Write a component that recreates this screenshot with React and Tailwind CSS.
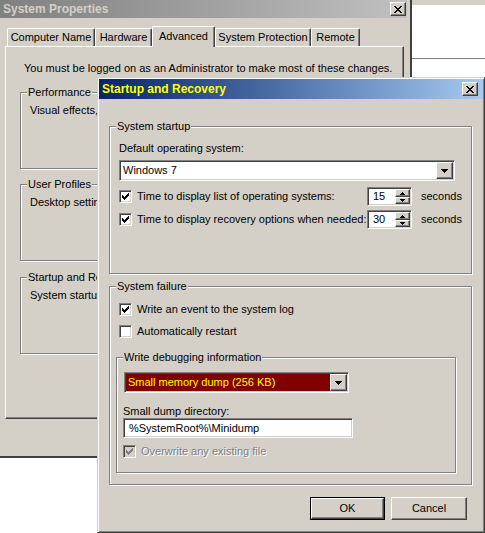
import React from "react";

const SUNKEN =
  "border border-t-[#808080] border-l-[#808080] border-r-white border-b-white shadow-[inset_1px_1px_0_#404040,inset_-1px_-1px_0_#d4d0c8]";
const RAISED =
  "border border-t-white border-l-white border-r-[#404040] border-b-[#404040] shadow-[inset_-1px_-1px_0_#808080]";
const ETCHED = "border border-[#808080] shadow-[inset_1px_1px_0_#fff,1px_1px_0_#fff]";

function CloseGlyph() {
  const rows = [
    [[0, 2], [6, 2]],
    [[1, 2], [5, 2]],
    [[2, 4]],
    [[3, 2]],
    [[2, 4]],
    [[1, 2], [5, 2]],
    [[0, 2], [6, 2]],
  ];
  return (
    <svg width="8" height="7" viewBox="0 0 8 7" shapeRendering="crispEdges">
      {rows.map((r, y) => r.map(([x, w]) => <rect key={y + "-" + x} x={x} y={y} width={w} height="1" fill="#000" />))}
    </svg>
  );
}

function CloseBtn() {
  return (
    <div className={`w-[16px] h-[14px] bg-[#d4d0c8] flex items-center justify-center ${RAISED}`}>
      <CloseGlyph />
    </div>
  );
}

function Arrow({ up, size = 7, color = "#000" }) {
  const h = Math.ceil(size / 2);
  return (
    <svg width={size} height={h} viewBox={`0 0 ${size} ${h}`} shapeRendering="crispEdges">
      {Array.from({ length: h }).map((_, i) => {
        const row = up ? h - 1 - i : i;
        return <rect key={i} x={i} y={row} width={size - i * 2} height="1" fill={color} />;
      })}
    </svg>
  );
}

function CheckGlyph({ color }) {
  const rows = [[[6, 1]], [[5, 2]], [[0, 1], [4, 3]], [[0, 2], [3, 3]], [[0, 5]], [[1, 3]], [[2, 1]]];
  return (
    <svg width="7" height="7" viewBox="0 0 7 7" shapeRendering="crispEdges">
      {rows.map((r, y) => r.map(([x, w]) => <rect key={y + "-" + x} x={x} y={y} width={w} height="1" fill={color} />))}
    </svg>
  );
}

function Check({ checked, disabled }) {
  return (
    <div
      className={`w-[13px] h-[13px] shrink-0 flex items-center justify-center ${SUNKEN} ${
        disabled ? "bg-[#d4d0c8]" : "bg-white"
      }`}
    >
      {checked && <CheckGlyph color={disabled ? "#808080" : "#000"} />}
    </div>
  );
}

function Group({ label, className, children }) {
  return (
    <div className={`relative ${ETCHED} ${className}`}>
      <span className="absolute left-[6px] -top-[7px] px-[1px] bg-[#d4d0c8] leading-[13px] whitespace-nowrap">
        {label}
      </span>
      {children}
    </div>
  );
}

function Spinner({ value }) {
  return (
    <div className={`w-[45px] h-[19px] bg-white flex items-stretch ${SUNKEN}`}>
      <span className="flex-1 pl-[5px] leading-[17px]">{value}</span>
      <div className="flex flex-col my-[1px] mr-[1px] w-[15px]">
        <div className={`h-[8px] bg-[#d4d0c8] flex items-center justify-center ${RAISED}`}>
          <Arrow up size={5} />
        </div>
        <div className={`h-[7px] bg-[#d4d0c8] flex items-center justify-center ${RAISED}`}>
          <Arrow size={5} />
        </div>
      </div>
    </div>
  );
}

function Combo({ text, width, dark }) {
  return (
    <div
      className={`h-[21px] flex items-stretch p-[1px] ${SUNKEN} ${dark ? "bg-[#800000]" : "bg-white"}`}
      style={{ width }}
    >
      <span className={`flex-1 pl-[2px] leading-[17px] ${dark ? "text-[#ffff00]" : ""}`}>{text}</span>
      <div className={`w-[17px] bg-[#d4d0c8] flex items-center justify-center ${RAISED}`}>
        <Arrow size={7} />
      </div>
    </div>
  );
}

function Tab({ label, w, selected }) {
  return (
    <div
      className={`flex items-center justify-center rounded-t-[2px] bg-[#d4d0c8] border-t border-l border-t-white border-l-white border-r border-r-[#404040] shadow-[inset_-1px_0_0_#808080] ${
        selected ? "h-[21px] -mb-[1px] relative z-10 pb-[2px]" : "h-[18px]"
      }`}
      style={{ width: w }}
    >
      {label}
    </div>
  );
}

function SystemProperties() {
  return (
    <div className="absolute left-0 top-0 w-[412px] h-[458px] bg-[#d4d0c8] border-r-2 border-b-2 border-r-[#404040] border-b-[#404040] flex flex-col">
      <div className="h-[18px] w-[407px] flex items-center justify-between pl-[3px] pr-[1px] bg-gradient-to-r from-[#808080] to-[#c0c0c0]">
        <span className="font-bold text-[12px] text-[#d4d0c8]">System Properties</span>
        <CloseBtn />
      </div>
      <div className="mt-[8px] ml-[7px] h-[20px] flex items-end">
        <Tab label="Computer Name" w={88} />
        <Tab label="Hardware" w={57} />
        <Tab label="Advanced" w={63} selected />
        <Tab label="System Protection" w={96} />
        <Tab label="Remote" w={49} />
      </div>
      <div className="ml-[5px] w-[399px] h-[373px] border border-t-white border-l-white border-r-[#404040] border-b-[#404040] shadow-[inset_-1px_-1px_0_#808080] flex flex-col pl-[14px]">
        <p className="mt-[15px] ml-[4px] leading-[13px]">
          You must be logged on as an Administrator to make most of these changes.
        </p>
        <Group label="Performance" className="mt-[17px] w-[368px] h-[77px]">
          <p className="mt-[11px] ml-[9px] leading-[13px]">Visual effects,</p>
        </Group>
        <Group label="User Profiles" className="mt-[15px] w-[368px] h-[77px]">
          <p className="mt-[11px] ml-[9px] leading-[13px]">Desktop settings</p>
        </Group>
        <Group label="Startup and Recovery" className="mt-[16px] w-[368px] h-[77px]">
          <p className="mt-[11px] ml-[9px] leading-[13px]">System startup</p>
        </Group>
      </div>
    </div>
  );
}

function CheckRow({ label, checked, disabled, className = "" }) {
  return (
    <div className={`flex items-center h-[13px] ${className}`}>
      <Check checked={checked} disabled={disabled} />
      <span
        className={`ml-[5px] leading-[13px] ${
          disabled ? "text-[#808080] [text-shadow:1px_1px_0_#fff]" : ""
        }`}
      >
        {label}
      </span>
    </div>
  );
}

function StartupAndRecovery() {
  return (
    <div className="absolute left-[97px] top-[77px] w-[388px] h-[456px] bg-[#d4d0c8] border border-t-[#d4d0c8] border-l-[#d4d0c8] border-r-[#404040] border-b-[#404040] shadow-[inset_1px_1px_0_#fff,inset_-1px_-1px_0_#808080] p-[1px] flex flex-col">
      <div className="h-[20px] flex items-center justify-between pl-[3px] pr-[5px] bg-gradient-to-r from-[#0a246a] to-[#a6caf0]">
        <span className="font-bold text-[12px] text-[#ffff00]">Startup and Recovery</span>
        <CloseBtn />
      </div>
      <div className="flex flex-col pl-[10px]">
        <Group label="System startup" className="mt-[27px] w-[363px] h-[148px] flex flex-col pl-[9px]">
          <p className="mt-[15px] leading-[13px]">Default operating system:</p>
          <div className="mt-[5px]">
            <Combo text="Windows 7" width={336} />
          </div>
          <div className="mt-[6px] flex items-center h-[19px]">
            <Check checked />
            <span className="ml-[5px] w-[230px] leading-[13px]">Time to display list of operating systems:</span>
            <Spinner value="15" />
            <span className="ml-[9px]">seconds</span>
          </div>
          <div className="mt-[4px] flex items-center h-[19px]">
            <Check checked />
            <span className="ml-[5px] w-[230px] leading-[13px] whitespace-nowrap">
              Time to display recovery options when needed:
            </span>
            <Spinner value="30" />
            <span className="ml-[9px]">seconds</span>
          </div>
        </Group>
        <Group label="System failure" className="mt-[12px] w-[363px] h-[199px] flex flex-col">
          <CheckRow label="Write an event to the system log" checked className="mt-[16px] ml-[9px]" />
          <CheckRow label="Automatically restart" className="mt-[9px] ml-[9px]" />
          <Group label="Write debugging information" className="mt-[19px] ml-[6px] w-[340px] h-[116px] flex flex-col pl-[6px]">
            <div className="mt-[14px] ml-[1px]">
              <Combo text="Small memory dump (256 KB)" width={225} dark />
            </div>
            <p className="mt-[12px] leading-[13px]">Small dump directory:</p>
            <div className={`w-[230px] h-[20px] bg-white flex items-center pl-[5px] ${SUNKEN}`}>
              %SystemRoot%\Minidump
            </div>
            <CheckRow label="Overwrite any existing file" checked disabled className="mt-[7px]" />
          </Group>
        </Group>
        <div className="mt-[12px] ml-[201px] flex gap-[6px]">
          <div className="w-[75px] h-[23px] border border-black">
            <div className={`w-full h-full bg-[#d4d0c8] flex items-center justify-center ${RAISED}`}>OK</div>
          </div>
          <div className={`w-[76px] h-[23px] bg-[#d4d0c8] flex items-center justify-center ${RAISED}`}>Cancel</div>
        </div>
      </div>
    </div>
  );
}

export default function App() {
  return (
    <div className="relative w-[485px] h-[533px] overflow-hidden bg-white text-black text-[11px] leading-[13px] font-['Liberation_Sans',Arial,sans-serif]">
      <div className="absolute left-[410px] top-0 right-0 h-[77px] flex flex-col">
        <div className="h-[5px] bg-[#d4d0c8]" />
        <div className="h-[54px] border-b border-[#808080] bg-white" />
      </div>
      <SystemProperties />
      <StartupAndRecovery />
    </div>
  );
}
